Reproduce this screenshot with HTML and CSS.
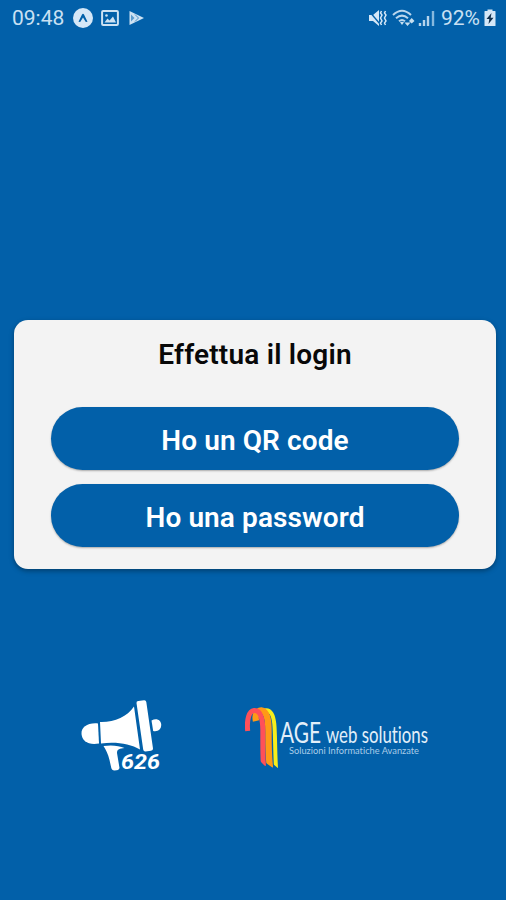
FILE: index.html
```html
<!DOCTYPE html>
<html lang="it">
<head>
  <meta charset="UTF-8" />
  <meta name="viewport" content="width=device-width, initial-scale=1.0"/>
  <title>Login</title>
  <link rel="stylesheet" href="styles.css">
</head>
<body>
  <header class="status-bar">
    <div class="status-left">
      <span class="clock">09:48</span>
      <svg class="icon-app" width="20" height="20" viewBox="0 0 20 20">
        <circle cx="10" cy="10" r="10" fill="#d5e7f7"/>
        <path d="M5.5 13.8 L9 6.5 Q10 5 11 6.5 L14.5 13.8 L12.8 14 L10 9.5 L7.2 14Z" fill="#0260a9"/>
      </svg>
      <svg class="icon-picture" width="18" height="16" viewBox="0 0 18 16">
        <rect x="1.1" y="1.1" width="15.8" height="13.8" rx="1" fill="none" stroke="#cde2f3" stroke-width="2"/>
        <path d="M3.5 12.5 L6.5 8.5 L8.5 10.5 L12 6.5 L15 12.5Z" fill="#cde2f3"/>
        <circle cx="5.5" cy="5.5" r="1.3" fill="#cde2f3"/>
      </svg>
      <svg class="icon-play" width="17" height="16" viewBox="0 0 17 16">
        <path d="M1.5 1 L16 8 L1.5 15Z" fill="#cde2f3"/>
        <path d="M3 4.5 L6.5 8 L3 11.5Z" fill="#5b9bce"/>
        <path d="M7 4.5 L10.5 8 L7 11.5" fill="none" stroke="#4b8fc6" stroke-width="1"/>
      </svg>
    </div>
    <div class="status-right">
      <svg width="20" height="18" viewBox="0 0 20 18">
        <path d="M1 6 H5 L11 1 V17 L5 12 H1Z" fill="#d5e7f7"/>
        <path d="M1 2 L12 15" stroke="#0260a9" stroke-width="1.3"/>
        <path d="M13.5 2 l-1 2 1.5 2 -1.5 3 1.5 3 -1.5 2 1 2 M17.5 2 l-1 2 1.5 2 -1.5 3 1.5 3 -1.5 2 1 2" fill="none" stroke="#d5e7f7" stroke-width="1.5"/>
      </svg>
      <svg class="icon-wifi" width="24" height="18" viewBox="0 0 24 18">
        <path d="M1 6 Q10 -2.5 19 6 M4 9.3 Q10 4 16 9.3 M7 12.3 Q10 9.8 13 12.3" fill="none" stroke="#b9d6ed" stroke-width="2"/>
        <path d="M8 13.3 Q10 12 12 13.3 L10 16Z M12.5 13.5 H18.5 L15.5 17Z M17 12 L19.7 9 L22.5 12 L19.7 14.5Z" fill="#c6deef"/>
      </svg>
      <svg class="icon-signal" width="17" height="17" viewBox="0 0 17 17">
        <path d="M2 13 V16 M6 10 V16 M10 6 V16" stroke="#b4d3ec" stroke-width="2.4"/>
        <path d="M15 1 V16" stroke="#86b8de" stroke-width="2.4"/>
      </svg>
      <span class="battery-level">92%</span>
      <svg class="icon-battery" width="12" height="18" viewBox="0 0 12 18">
        <path d="M3.5 0.5 H8.5 V2 H11 Q11.5 2 11.5 2.5 V16.5 Q11.5 17 11 17 H1 Q0.5 17 0.5 16.5 V2.5 Q0.5 2 1 2 H3.5Z" fill="#d5e7f7"/>
        <path d="M7.5 4 L2.5 10 H5.3 L4.5 15 L9.5 8.8 H6.7Z" fill="#12304d"/>
      </svg>
    </div>
  </header>

  <main class="login-card">
    <h1>Effettua il login</h1>
    <button class="login-button">Ho un QR code</button>
    <button class="login-button">Ho una password</button>
  </main>

  <footer class="logos">
    <svg class="logo-626" width="90" height="80" viewBox="0 0 90 80">
      <g fill="#fff">
        <path d="M18 23.5 C8 22.5 1 27 1.5 34 C2 41 8.5 45.5 19 43.5Z"/>
        <path d="M20 22 C34 22.5 47 17 54 6.5 L60 49.5 C50 44 37 41.5 21 43.5Z"/>
        <path d="M56.5 3 Q56.3 1.2 58.3 1 L64 0.2 Q66 0 66.3 2 L73 48.5 Q73.2 50.5 71 50.8 L65.5 51.4 Q63.5 51.5 63.2 49.5Z"/>
        <path d="M71.5 20.5 C76.5 17.5 81 20 81.2 24.5 C81.4 29.5 77.5 32 73.2 31Z"/>
        <path d="M23.5 46 C31 44.8 39 45.5 44.5 48 C40 48.5 37 49 37 53 L39.5 68 Q39 70.5 34.5 70.5 C32.5 70.5 31.8 69.5 31.3 68 L29.5 60 C28 54 26 50 23.5 46Z"/>
      </g>
      <text x="41" y="69" textLength="39" lengthAdjust="spacingAndGlyphs">626</text>
    </svg>
    <svg class="logo-age" width="190" height="66" viewBox="0 0 190 66">
      <path d="M19 4.5 C26 2.5 28.5 10 29.3 18 C30.3 28 29.8 42 31 62" fill="none" stroke="#f8ee1b" stroke-width="4"/>
      <path d="M11 15 C9 6 16 2 19.5 6 C24 11 23.5 22 23.5 30 C23.5 42 23.5 50 25 62" fill="none" stroke="#ff9a16" stroke-width="6.4"/>
      <path d="M2.7 25 C1.5 14 4 5 9 4.6 C16 4 17.7 14 17.8 24 C17.9 38 17.5 48 18.5 60" fill="none" stroke="#ff5058" stroke-width="5"/>
      <path d="M14 54 L21 61 V57 L28 62 V58 L34 63 V66 H14Z" fill="#0260a9"/>
      <text class="age-name" x="35" y="37" textLength="41" lengthAdjust="spacingAndGlyphs">AGE</text>
      <text class="age-web" x="81" y="37" textLength="102" lengthAdjust="spacingAndGlyphs">web solutions</text>
      <text class="age-tagline" x="44" y="48" textLength="130" lengthAdjust="spacingAndGlyphs">Soluzioni Informatiche Avanzate</text>
    </svg>
  </footer>
</body>
</html>
```
FILE: styles.css
```css
* {
  box-sizing: border-box;
  margin: 0;
  padding: 0;
}

body {
  font-family: Roboto, sans-serif;
  background-color: #0260a9;
  height: 900px;
  overflow: hidden;
}

/* Status bar */
.status-bar {
  display: flex;
  justify-content: space-between;
  height: 36px;
  padding: 0 10px 0 12px;
  color: #c9e0f3;
  font-size: 21px;
}

.status-left,
.status-right {
  display: flex;
  align-items: center;
}

.icon-app {
  margin-left: 9px;
}

.icon-picture {
  margin-left: 8px;
}

.icon-play {
  margin-left: 9px;
}

.icon-wifi {
  margin-left: 4px;
}

.icon-signal {
  margin-left: 2px;
}

.battery-level {
  margin-left: 6px;
}

.icon-battery {
  margin-left: 4px;
}

/* Login card */
.login-card {
  display: flex;
  flex-direction: column;
  align-items: center;
  width: 482px;
  height: 249px;
  margin: 284px 0 0 14px;
  padding-top: 18px;
  background-color: #f3f3f3;
  border-radius: 14px;
  box-shadow: 0 2px 5px rgba(0, 0, 0, 0.35);
}

.login-card h1 {
  font-size: 28px;
  font-weight: 600;
  line-height: 34px;
  letter-spacing: 0.2px;
  margin-bottom: 35px;
  color: #080808;
}

.login-button {
  width: 408px;
  height: 63px;
  margin-bottom: 14px;
  padding-top: 4px;
  border: none;
  border-radius: 32px;
  background-color: #0260a9;
  color: #fff;
  font-family: inherit;
  font-size: 28px;
  font-weight: 600;
  letter-spacing: 0.1px;
  box-shadow: 0 1px 2px rgba(0, 0, 0, 0.3);
}

/* Logos */
.logos {
  display: flex;
  align-items: flex-start;
  margin: 131px 0 0 80px;
}

.logo-626 text {
  font-family: Roboto, sans-serif;
  font-size: 21px;
  font-weight: bold;
  font-style: italic;
  fill: #fff;
}

.logo-age {
  margin: 6px 0 0 75px;
}

.logo-age text {
  font-family: Lato, sans-serif;
  font-variant-ligatures: none;
  fill: #e3eff9;
}

.logo-age .age-name {
  font-size: 29px;
}

.logo-age .age-web {
  font-size: 24px;
}

.logo-age .age-tagline {
  font-size: 10px;
  fill: #a9cce8;
}
```
